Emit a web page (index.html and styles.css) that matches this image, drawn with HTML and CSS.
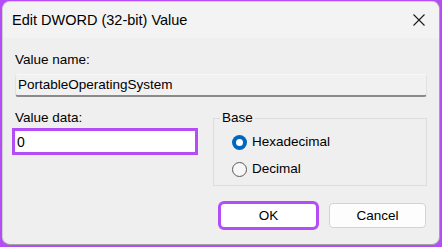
FILE: index.html
```html
<!DOCTYPE html>
<html lang="en">
<head>
<meta charset="utf-8">
<title>Edit DWORD (32-bit) Value</title>
<link rel="stylesheet" href="styles.css">
</head>
<body>
<div class="frame">
  <div class="window">
    <div class="titlebar">
      <span class="title">Edit DWORD (32-bit) Value</span>
      <svg class="close" viewBox="0 0 12 12" aria-label="Close">
        <path d="M0.5 0.5 L11.5 11.5 M11.5 0.5 L0.5 11.5" stroke="#1b1b1b" stroke-width="1.1" fill="none"/>
      </svg>
    </div>
    <div class="content">
      <div class="label">Value name:</div>
      <div class="namebox">PortableOperatingSystem</div>
      <div class="row">
        <div class="col">
          <div class="label">Value data:</div>
          <div class="databox">0</div>
        </div>
        <fieldset class="group">
          <legend>Base</legend>
          <div class="option"><span class="radio on"></span><span>Hexadecimal</span></div>
          <div class="option"><span class="radio off"></span><span>Decimal</span></div>
        </fieldset>
      </div>
      <div class="buttons">
        <button class="btn primary">OK</button>
        <button class="btn">Cancel</button>
      </div>
    </div>
  </div>
</div>
</body>
</html>
```
FILE: styles.css
```css
* { box-sizing: border-box; }
html, body { margin: 0; padding: 0; }
body {
  font-family: "Liberation Sans", Arial, sans-serif;
  font-size: 13.5px;
  color: #000;
}
.frame {
  width: 442px;
  height: 247px;
  padding: 1px 2px 2px 2px;
  background: #b44df5;
}
.window {
  height: 100%;
  background: #efefef;
  border: 1px solid #cfcfcf;
  border-right-color: #a3a3a3;
  border-bottom-color: #a3a3a3;
  border-radius: 8px;
  overflow: hidden;
  display: flex;
  flex-direction: column;
}
.titlebar {
  flex: none;
  height: 36px;
  background: #f3f3f3;
  display: flex;
  align-items: center;
  justify-content: space-between;
  padding: 1px 14px 0 9px;
}
.title { font-size: 14.5px; line-height: 35px; }
.close { width: 12px; height: 12px; display: block; margin-top: -2px; }
.content { padding: 14px 12px 0 12px; }
.label { line-height: 16px; }
.namebox {
  margin-top: 6px;
  height: 23px;
  border: 1px solid #e2e2e2;
  border-top-color: #f8f8f8;
  border-bottom: 2px solid #8a8a8a;
  border-radius: 3px;
  background: #f1f1f1;
  padding: 0 2px;
  line-height: 20px;
}
.row {
  display: flex;
  gap: 18px;
  margin-top: 13px;
  align-items: flex-start;
}
.col { width: 180px; flex: none; }
.databox {
  margin-top: 5px;
  height: 21px;
  background: #fff;
  outline: 3px solid #b44df5;
  padding: 2px 2px 0;
  line-height: 19px;
  font-size: 14px;
}
.group {
  flex: 1;
  min-width: 0;
  margin: 0;
  padding: 8px 0 8px 0;
  border: 1px solid #dcdcdc;
}
.group legend { margin-left: 6px; padding: 0 2px; line-height: 16px; }
.option {
  display: flex;
  align-items: center;
  gap: 5px;
  line-height: 16px;
  margin-left: 18px;
}
.option + .option { margin-top: 11px; }
.radio { width: 15px; height: 15px; border-radius: 50%; flex: none; }
.radio.on {
  background: #0067c0;
  display: flex;
  align-items: center;
  justify-content: center;
}
.radio.on::after {
  content: "";
  width: 7px;
  height: 7px;
  border-radius: 50%;
  background: #fff;
}
.radio.off { border: 1px solid #5a5a5a; background: #f7f7f7; }
.buttons {
  display: flex;
  justify-content: flex-end;
  gap: 12px;
  margin-top: 17px;
  padding-right: 1px;
}
.btn {
  width: 97px;
  height: 25px;
  padding: 0;
  font: inherit;
  color: #000;
  border: 1px solid #d3d3d3;
  border-radius: 4px;
  background: #fdfdfd;
  text-align: center;
  line-height: 23px;
}
.btn.primary {
  background: #fff;
  outline: 3px solid #b44df5;
  outline-offset: -1px;
}
```
